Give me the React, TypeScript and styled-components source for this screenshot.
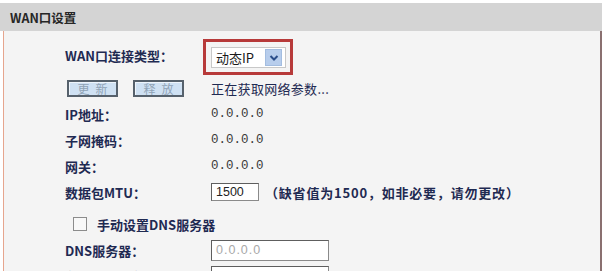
import React from 'react';
import styled, { createGlobalStyle } from 'styled-components';

const GlobalStyle = createGlobalStyle`
    html, body {
        margin: 0;
        padding: 0;
        background: #ffffff;
    }
    body {
        font-family: "Noto Sans CJK SC", "Liberation Sans", sans-serif;
        overflow: hidden;
    }
`;

const Page = styled.div`
    width: 606px;
    height: 271px;
    padding-top: 3px;
    box-sizing: border-box;
    overflow: hidden;
`;

const Header = styled.div`
    width: 602px;
    height: 28px;
    background: #d4d4d4;
    display: flex;
    align-items: center;
    padding-left: 10px;
    box-sizing: border-box;
    font-size: 12.5px;
    font-weight: 700;
    color: #262626;
`;

const Panel = styled.div`
    margin-left: 3px;
    width: 599px;
    height: 260px;
    box-sizing: border-box;
    background: #f4f4f4;
    border-left: 1px solid #e6a58e;
    border-right: 2px solid #8a7070;
    padding-left: 61px;
    padding-top: 8px;
`;

const Row = styled.div<{ $gap?: number; $h?: number }>`
    display: flex;
    align-items: center;
    height: ${p => p.$h ?? 26}px;
    margin-top: ${p => p.$gap ?? 0}px;
`;

const Label = styled.div<{ $lift?: number }>`
    width: 146px;
    flex-shrink: 0;
    font-size: 13px;
    font-weight: 700;
    color: #1f2a52;
    padding-bottom: ${p => p.$lift ?? 0}px;
`;

const Value = styled.div`
    font-family: "Liberation Mono", monospace;
    font-size: 12.5px;
    color: #3a3a3a;
`;

const Status = styled.div`
    font-size: 13px;
    color: #1f2a52;
    letter-spacing: 0.3px;
`;

const Highlight = styled.div`
    margin-left: -8px;
    border: 3px solid #b73a3a;
    padding: 5px 4px 4px 5px;
    display: flex;
`;

const Select = styled.div`
    width: 75px;
    height: 21px;
    box-sizing: border-box;
    background: #ffffff;
    border: 1px solid #c8c8c8;
    display: flex;
    align-items: center;
    justify-content: space-between;
    padding: 0 3px 0 4px;
    font-size: 13px;
    color: #1a1a1a;
`;

const DropButton = styled.div`
    width: 17px;
    height: 17px;
    background: #b7cdec;
    border: 1px solid #a3bde0;
    box-sizing: border-box;
    display: flex;
    align-items: center;
    justify-content: center;
`;

const ButtonGroup = styled.div`
    display: flex;
    gap: 15px;
    width: 146px;
    box-sizing: border-box;
    padding-left: 2px;
    flex-shrink: 0;
`;

const Button = styled.div`
    width: 51px;
    height: 17px;
    box-sizing: border-box;
    border: 2px solid #56616c;
    background: #cfe1f3;
    box-shadow: inset 1px 1px 0 #eef5fc;
    color: #8fa3b6;
    font-size: 12px;
    letter-spacing: 6px;
    display: flex;
    align-items: center;
    justify-content: center;
    padding-left: 6px;
`;

const Input = styled.div<{ $w: number; $h: number; $muted?: boolean }>`
    width: ${p => p.$w}px;
    height: ${p => p.$h}px;
    box-sizing: border-box;
    border: 1px solid #5e5e5e;
    border-right-color: #8a8a8a;
    border-bottom-color: #8a8a8a;
    background: #ffffff;
    display: flex;
    align-items: center;
    padding-left: 4px;
    font-family: "Liberation Sans", sans-serif;
    font-size: 12.5px;
    color: ${p => (p.$muted ? '#a8a8a8' : '#222222')};
    letter-spacing: ${p => (p.$muted ? '1px' : '0')};
`;

const Note = styled.div`
    margin-left: 6px;
    font-size: 13px;
    font-weight: 700;
    color: #1f2a52;
    letter-spacing: 0.8px;
`;

const CheckRow = styled.label`
    display: flex;
    align-items: center;
    padding-left: 8px;
    font-size: 13px;
    font-weight: 700;
    color: #1f2a52;
`;

const Box = styled.span`
    width: 14px;
    height: 14px;
    margin-right: 10px;
    box-sizing: border-box;
    border: 1px solid #8c8c8c;
    background: #f8f8f8;
`;

const Chevron = () => (
    <svg width="10" height="8" viewBox="0 0 10 8">
        <path d="M1.5 2 L5 5.5 L8.5 2" fill="none" stroke="#2a4d8a" strokeWidth="2" />
    </svg>
);

const App = () => {
    return (
        <Page>
            <GlobalStyle />
            <Header>WAN口设置</Header>
            <Panel>
                <Row $h={36}>
                    <Label $lift={4}>WAN口连接类型：</Label>
                    <Highlight>
                        <Select>
                            <span>动态IP</span>
                            <DropButton><Chevron /></DropButton>
                        </Select>
                    </Highlight>
                </Row>
                <Row>
                    <ButtonGroup>
                        <Button>更新</Button>
                        <Button>释放</Button>
                    </ButtonGroup>
                    <Status>正在获取网络参数...</Status>
                </Row>
                <Row>
                    <Label>IP地址：</Label>
                    <Value>0.0.0.0</Value>
                </Row>
                <Row>
                    <Label>子网掩码：</Label>
                    <Value>0.0.0.0</Value>
                </Row>
                <Row>
                    <Label>网关：</Label>
                    <Value>0.0.0.0</Value>
                </Row>
                <Row>
                    <Label>数据包MTU：</Label>
                    <Input $w={48} $h={18}>1500</Input>
                    <Note>（缺省值为1500，如非必要，请勿更改）</Note>
                </Row>
                <Row $gap={6}>
                    <CheckRow>
                        <Box />
                        <span>手动设置DNS服务器</span>
                    </CheckRow>
                </Row>
                <Row>
                    <Label>DNS服务器：</Label>
                    <Input $w={118} $h={21} $muted>0.0.0.0</Input>
                </Row>
                <Row>
                    <Label>备用DNS服务器：</Label>
                    <Input $w={118} $h={21} $muted>0.0.0.0</Input>
                </Row>
            </Panel>
        </Page>
    );
};

export default App;
